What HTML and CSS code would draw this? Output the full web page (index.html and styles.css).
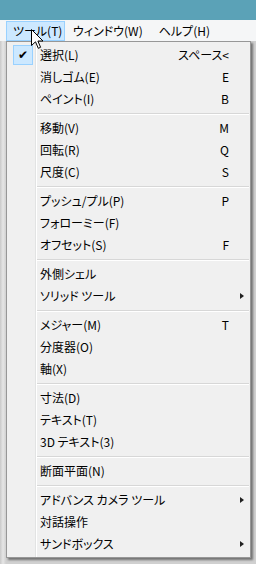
FILE: index.html
```html
<!DOCTYPE html>
<html lang="ja">
<head>
<meta charset="utf-8">
<link rel="stylesheet" href="styles.css">
</head>
<body>
<div class="screen">
  <div class="titlebar"></div>
  <div class="menubar">
    <span class="mb-item active">ツール(T)</span>
    <span class="mb-item">ウィンドウ(W)</span>
    <span class="mb-item">ヘルプ(H)</span>
  </div>
  <div class="workspace">
    <div class="menu">
      <div class="item"><span class="icon"><span class="check">✔</span></span><span class="label">選択(L)</span><span class="key">スペース&lt;</span><span class="sub"></span></div>
      <div class="item"><span class="icon"></span><span class="label">消しゴム(E)</span><span class="key">E</span><span class="sub"></span></div>
      <div class="item"><span class="icon"></span><span class="label">ペイント(I)</span><span class="key">B</span><span class="sub"></span></div>
      <div class="sep"></div>
      <div class="item"><span class="icon"></span><span class="label">移動(V)</span><span class="key">M</span><span class="sub"></span></div>
      <div class="item"><span class="icon"></span><span class="label">回転(R)</span><span class="key">Q</span><span class="sub"></span></div>
      <div class="item"><span class="icon"></span><span class="label">尺度(C)</span><span class="key">S</span><span class="sub"></span></div>
      <div class="sep"></div>
      <div class="item"><span class="icon"></span><span class="label">プッシュ/プル(P)</span><span class="key">P</span><span class="sub"></span></div>
      <div class="item"><span class="icon"></span><span class="label">フォローミー(F)</span><span class="key"></span><span class="sub"></span></div>
      <div class="item"><span class="icon"></span><span class="label">オフセット(S)</span><span class="key">F</span><span class="sub"></span></div>
      <div class="sep"></div>
      <div class="item"><span class="icon"></span><span class="label">外側シェル</span><span class="key"></span><span class="sub"></span></div>
      <div class="item"><span class="icon"></span><span class="label">ソリッド ツール</span><span class="key"></span><span class="sub"><span class="arrow"></span></span></div>
      <div class="sep"></div>
      <div class="item"><span class="icon"></span><span class="label">メジャー(M)</span><span class="key">T</span><span class="sub"></span></div>
      <div class="item"><span class="icon"></span><span class="label">分度器(O)</span><span class="key"></span><span class="sub"></span></div>
      <div class="item"><span class="icon"></span><span class="label">軸(X)</span><span class="key"></span><span class="sub"></span></div>
      <div class="sep"></div>
      <div class="item"><span class="icon"></span><span class="label">寸法(D)</span><span class="key"></span><span class="sub"></span></div>
      <div class="item"><span class="icon"></span><span class="label">テキスト(T)</span><span class="key"></span><span class="sub"></span></div>
      <div class="item"><span class="icon"></span><span class="label">3D テキスト(3)</span><span class="key"></span><span class="sub"></span></div>
      <div class="sep"></div>
      <div class="item"><span class="icon"></span><span class="label">断面平面(N)</span><span class="key"></span><span class="sub"></span></div>
      <div class="sep"></div>
      <div class="item"><span class="icon"></span><span class="label">アドバンス カメラ ツール</span><span class="key"></span><span class="sub"><span class="arrow"></span></span></div>
      <div class="item"><span class="icon"></span><span class="label">対話操作</span><span class="key"></span><span class="sub"></span></div>
      <div class="item"><span class="icon"></span><span class="label">サンドボックス</span><span class="key"></span><span class="sub"><span class="arrow"></span></span></div>
    </div>
  </div>
  <svg class="cursor" width="14" height="21" viewBox="0 0 14 21">
    <path d="M0.5 0.5 L0.5 16.5 L4.5 12.8 L7.3 19.3 L9.6 18.3 L6.9 12 L12 12 Z" fill="#fff" stroke="#000" stroke-width="1" stroke-linejoin="miter"/>
  </svg>
</div>
</body>
</html>
```

FILE: styles.css
```css
html, body {
  margin: 0;
  padding: 0;
}
body {
  width: 256px;
  height: 564px;
  overflow: hidden;
  background: #d2d2d2;
  font-family: "Noto Sans CJK JP", "Noto Sans", sans-serif;
  font-size: 12px;
  color: #000;
  font-feature-settings: "palt";
}
.screen {
  position: relative;
  width: 256px;
  height: 564px;
  display: flex;
  flex-direction: column;
}
.titlebar {
  height: 20px;
  background: #5ba2b7;
  flex: none;
}
.menubar {
  height: 21px;
  flex: none;
  background: #f5f6f7;
  display: flex;
  align-items: stretch;
  padding-left: 6px;
  box-sizing: border-box;
  padding-top: 1px;
}
.mb-item {
  display: flex;
  align-items: center;
  padding: 0 7px;
  line-height: 1;
  white-space: nowrap;
  box-sizing: border-box;
  border: 1px solid transparent;
}
.mb-item.active {
  background: #cce8ff;
  border-color: #99d1ff;
  padding: 0 6px;
  width: 59px;
}
.workspace {
  flex: 1;
  background: linear-gradient(to right, #c9c9c9 0, #e6e6e6 3px, #d0d0d0 6px);
  position: relative;
}
.menu {
  margin-left: 6px;
  width: 245px;
  box-sizing: border-box;
  border: 1px solid #979797;
  background: #f0f0f0 linear-gradient(to right, transparent 28px, #e2e3e3 28px, #e2e3e3 29px, #fff 29px, #fff 30px, transparent 30px);
  padding: 2px 0;
  box-shadow: 2px 2px 2px rgba(0, 0, 0, 0.45);
  display: flex;
  flex-direction: column;
}
.item {
  height: 22px;
  display: grid;
  grid-template-columns: 33px 1fr auto 21px;
  align-items: center;
  line-height: 1;
}
.icon {
  display: flex;
  align-items: center;
  justify-content: flex-start;
  padding-left: 6px;
}
.check {
  width: 18px;
  height: 18px;
  background: #cce8ff;
  border: 1px solid #99d1ff;
  display: flex;
  align-items: center;
  justify-content: center;
  font-size: 12px;
  color: #000;
  font-family: "DejaVu Sans", sans-serif;
}
.label {
  white-space: nowrap;
}
.key {
  text-align: right;
  white-space: nowrap;
}
.sub {
  display: flex;
  align-items: center;
  justify-content: center;
  padding-left: 4px;
}
.arrow {
  width: 0;
  height: 0;
  border-top: 3.5px solid transparent;
  border-bottom: 3.5px solid transparent;
  border-left: 4px solid #202020;
}
.sep {
  height: 7px;
  margin-left: 30px;
  margin-right: 1px;
  display: flex;
  align-items: center;
}
.sep::before {
  content: "";
  display: block;
  width: 100%;
  height: 1px;
  background: #d7d7d7;
  box-shadow: 0 1px 0 #fff;
}
.cursor {
  position: absolute;
  left: 31px;
  top: 29px;
}
```
